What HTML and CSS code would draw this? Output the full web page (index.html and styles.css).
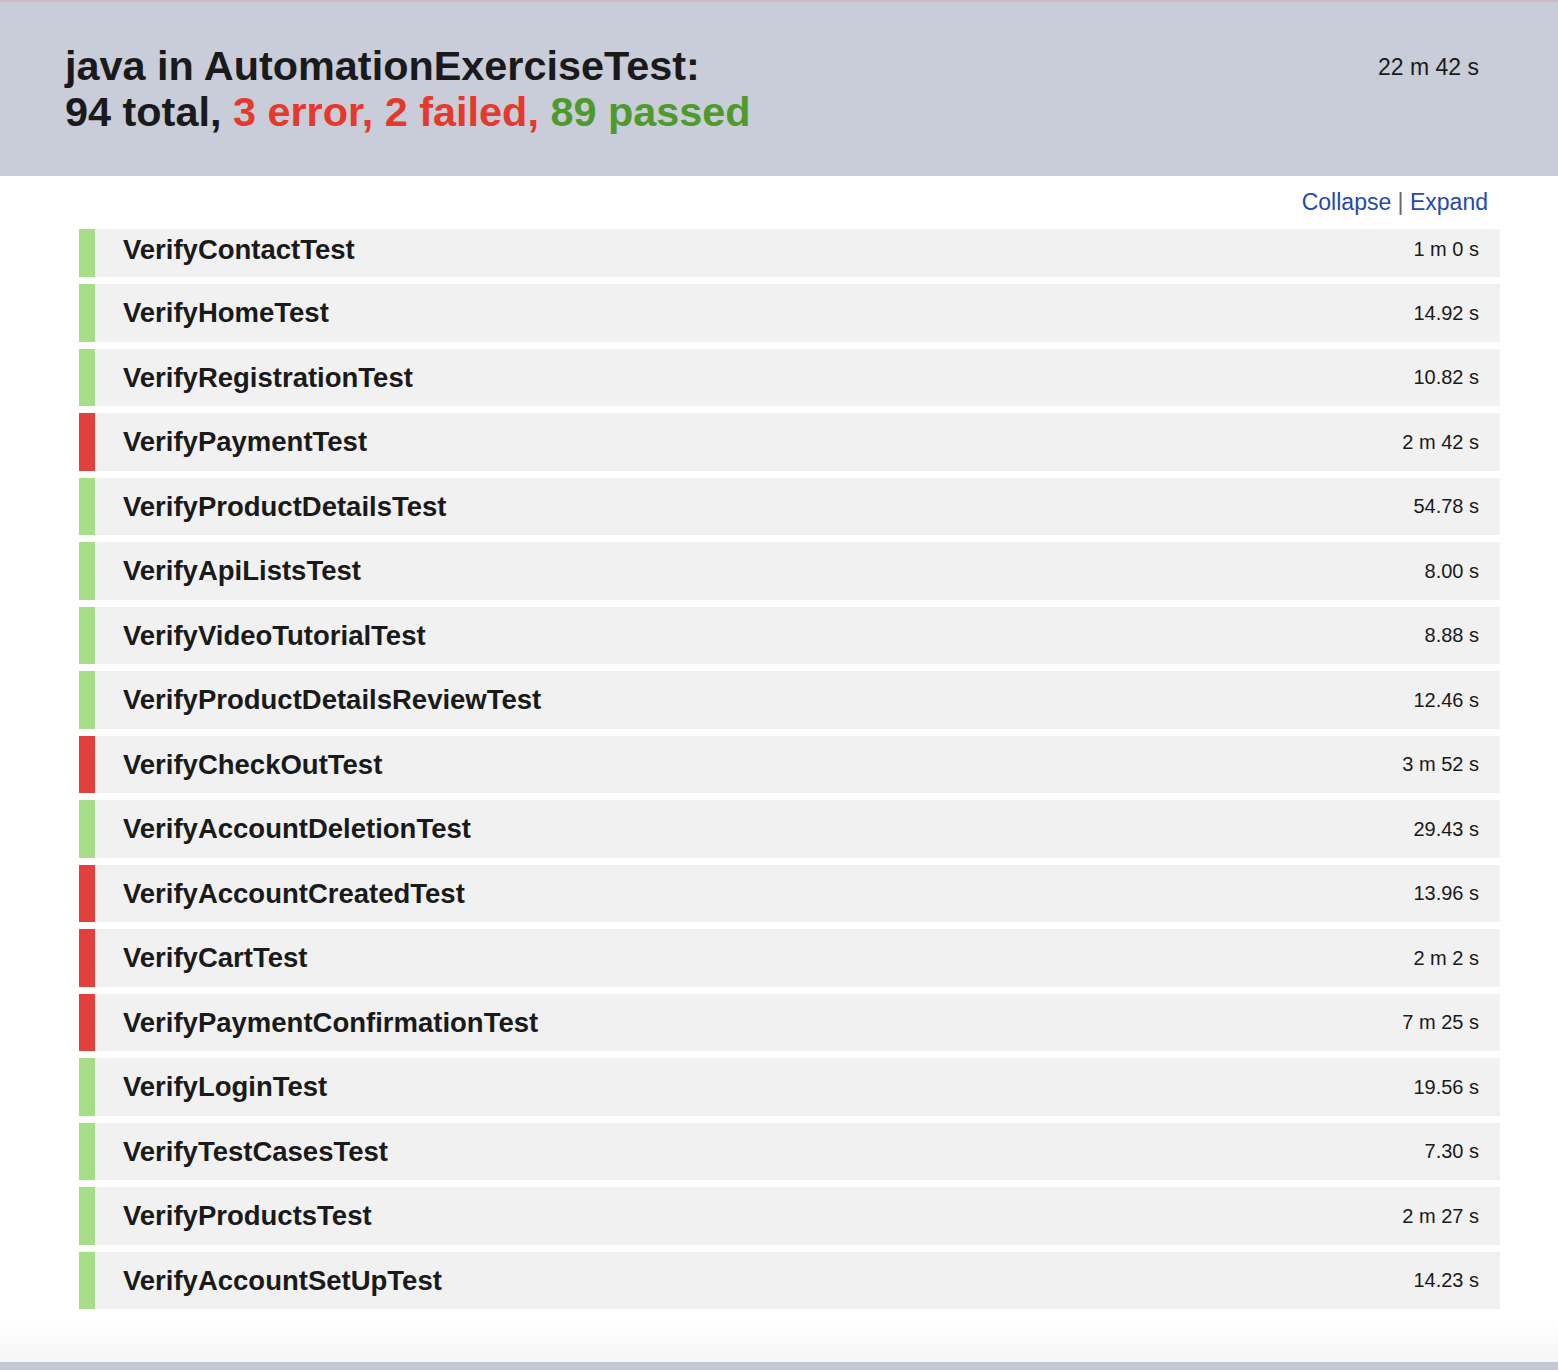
FILE: index.html
```html
<!DOCTYPE html>
<html>
<head>
<meta charset="utf-8">
<title>java in AutomationExerciseTest</title>
<link rel="stylesheet" href="styles.css">
</head>
<body>
<header class="summary">
  <h1 class="summary-title">java in AutomationExerciseTest:<br>94 total, <span class="bad">3 error, 2 failed,</span> <span class="good">89 passed</span></h1>
  <div class="summary-time">22 m 42 s</div>
</header>
<main class="panel">
  <div class="toggles"><a class="toggle-link" href="#">Collapse</a> <span class="sep">|</span> <a class="toggle-link" href="#">Expand</a></div>
  <div class="suites">
    <div class="suite pass first"><span class="suite-name">VerifyContactTest</span><span class="suite-time">1 m 0 s</span></div>
    <div class="suite pass"><span class="suite-name">VerifyHomeTest</span><span class="suite-time">14.92 s</span></div>
    <div class="suite pass"><span class="suite-name">VerifyRegistrationTest</span><span class="suite-time">10.82 s</span></div>
    <div class="suite fail"><span class="suite-name">VerifyPaymentTest</span><span class="suite-time">2 m 42 s</span></div>
    <div class="suite pass"><span class="suite-name">VerifyProductDetailsTest</span><span class="suite-time">54.78 s</span></div>
    <div class="suite pass"><span class="suite-name">VerifyApiListsTest</span><span class="suite-time">8.00 s</span></div>
    <div class="suite pass"><span class="suite-name">VerifyVideoTutorialTest</span><span class="suite-time">8.88 s</span></div>
    <div class="suite pass"><span class="suite-name">VerifyProductDetailsReviewTest</span><span class="suite-time">12.46 s</span></div>
    <div class="suite fail"><span class="suite-name">VerifyCheckOutTest</span><span class="suite-time">3 m 52 s</span></div>
    <div class="suite pass"><span class="suite-name">VerifyAccountDeletionTest</span><span class="suite-time">29.43 s</span></div>
    <div class="suite fail"><span class="suite-name">VerifyAccountCreatedTest</span><span class="suite-time">13.96 s</span></div>
    <div class="suite fail"><span class="suite-name">VerifyCartTest</span><span class="suite-time">2 m 2 s</span></div>
    <div class="suite fail"><span class="suite-name">VerifyPaymentConfirmationTest</span><span class="suite-time">7 m 25 s</span></div>
    <div class="suite pass"><span class="suite-name">VerifyLoginTest</span><span class="suite-time">19.56 s</span></div>
    <div class="suite pass"><span class="suite-name">VerifyTestCasesTest</span><span class="suite-time">7.30 s</span></div>
    <div class="suite pass"><span class="suite-name">VerifyProductsTest</span><span class="suite-time">2 m 27 s</span></div>
    <div class="suite pass"><span class="suite-name">VerifyAccountSetUpTest</span><span class="suite-time">14.23 s</span></div>
  </div>
</main>
<footer class="bottom-bar"></footer>
</body>
</html>
```
FILE: styles.css
```css
html, body {
  margin: 0;
  padding: 0;
  background: #ffffff;
}
body {
  font-family: "Liberation Sans", Arial, Helvetica, sans-serif;
  color: #1a1a1a;
}
.summary {
  border-top: 2px solid #cfb9c3;
  background: #c8cdd9;
  height: 176px;
  box-sizing: border-box;
  padding: 41px 79px 0 65px;
  display: flex;
  justify-content: space-between;
  align-items: flex-start;
}
.summary-title {
  margin: 0;
  font-size: 41.4px;
  line-height: 46px;
  font-weight: bold;
  color: #1a1a1a;
}
.bad { color: #e5392b; }
.good { color: #4e9a2d; }
.summary-time {
  margin-top: 11px;
  font-size: 23px;
  line-height: 26.4px;
  color: #1a1a1a;
}
.panel {
  background: linear-gradient(to bottom, #ffffff 0%, #ffffff calc(100% - 45px), #f6f6f7 100%);
  padding-bottom: 52.5px;
}
.toggles {
  text-align: right;
  padding: 13px 70px 13.4px 0;
  font-size: 23px;
  line-height: 26.4px;
}
.toggle-link {
  color: #2549b0;
  text-decoration: none;
}
.sep {
  color: #666666;
}
.suites {
  margin: 0 58px 0 79px;
  display: flex;
  flex-direction: column;
  gap: 7px;
}
.suite {
  display: flex;
  justify-content: space-between;
  align-items: center;
  height: 57.5px;
  box-sizing: border-box;
  background: #f1f1f1;
  border-left: 16px solid #a5de86;
  padding: 0 21px 0 28px;
}
.suite.fail {
  border-left-color: #e1413a;
}
.suite.first {
  height: 48.5px;
  padding-top: 5px;
  padding-bottom: 12px;
}
.suite-name {
  font-size: 27.5px;
  font-weight: bold;
  color: #1a1a1a;
}
.suite-time {
  font-size: 20px;
  color: #1a1a1a;
}
.bottom-bar {
  height: 9px;
  background: #c3c8d5;
}
```
